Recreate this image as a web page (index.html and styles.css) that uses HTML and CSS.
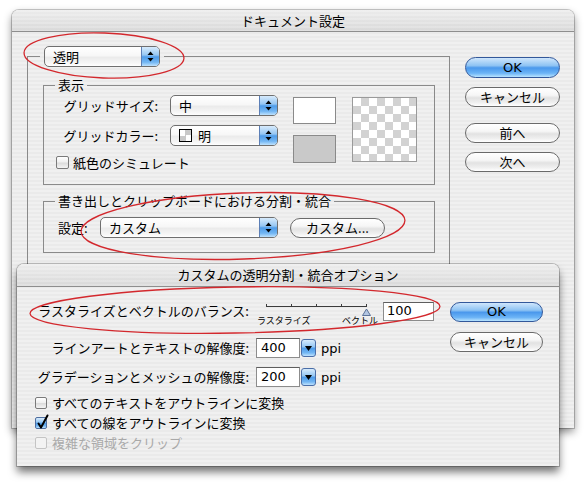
FILE: index.html
```html
<!DOCTYPE html>
<html lang="ja">
<head>
<meta charset="utf-8">
<title>ドキュメント設定</title>
<link rel="stylesheet" href="styles.css">
</head>
<body>
<div class="desk">
  <section class="win win-main">
    <header class="titlebar">ドキュメント設定</header>
    <div class="main-body">
      <fieldset class="grp grp-outer">
        <legend class="lg-popup">
          <div class="popup popup-trans">
            <span class="val">透明</span>
            <span class="cap"><svg width="7" height="11" viewBox="0 0 7 11"><polygon points="3.5,0.5 6.5,4 0.5,4" fill="#000"/><polygon points="0.5,7 6.5,7 3.5,10.5" fill="#000"/></svg></span>
          </div>
        </legend>
        <fieldset class="grp grp-view">
          <legend class="lg">表示</legend>
          <div class="view-row">
            <div class="form-grid">
              <span class="lbl">グリッドサイズ:</span>
              <div class="popup popup-mid">
                <span class="val">中</span>
                <span class="cap"><svg width="7" height="11" viewBox="0 0 7 11"><polygon points="3.5,0.5 6.5,4 0.5,4" fill="#000"/><polygon points="0.5,7 6.5,7 3.5,10.5" fill="#000"/></svg></span>
              </div>
              <span class="lbl">グリッドカラー:</span>
              <div class="popup popup-mid">
                <span class="val val-icon"><span class="mini-checker"></span>明</span>
                <span class="cap"><svg width="7" height="11" viewBox="0 0 7 11"><polygon points="3.5,0.5 6.5,4 0.5,4" fill="#000"/><polygon points="0.5,7 6.5,7 3.5,10.5" fill="#000"/></svg></span>
              </div>
              <div class="check-row span2"><span class="cb cb-lg"></span><span>紙色のシミュレート</span></div>
            </div>
            <div class="swatches">
              <div class="sw sw-white"></div>
              <div class="sw sw-gray"></div>
            </div>
            <div class="checker"></div>
          </div>
        </fieldset>
        <fieldset class="grp grp-export">
          <legend class="lg">書き出しとクリップボードにおける分割・統合</legend>
          <div class="export-row">
            <span class="lbl-set">設定:</span>
            <div class="popup popup-wide">
              <span class="val">カスタム</span>
              <span class="cap"><svg width="7" height="11" viewBox="0 0 7 11"><polygon points="3.5,0.5 6.5,4 0.5,4" fill="#000"/><polygon points="0.5,7 6.5,7 3.5,10.5" fill="#000"/></svg></span>
            </div>
            <button class="btn btn-custom">カスタム...</button>
          </div>
        </fieldset>
      </fieldset>
      <div class="btn-col main-btns">
        <button class="btn btn-default btn-ok">OK</button>
        <button class="btn btn-cancel">キャンセル</button>
        <button class="btn btn-prev">前へ</button>
        <button class="btn btn-next">次へ</button>
      </div>
    </div>
  </section>

  <section class="win win-sub">
    <header class="titlebar titlebar-sub">カスタムの透明分割・統合オプション</header>
    <div class="sub-body">
      <div class="sub-form">
        <div class="row row-balance">
          <span class="rlbl">ラスタライズとベクトルのバランス:</span>
          <div class="slider">
            <svg class="slider-track" width="122" height="16" viewBox="0 0 122 16">
              <line x1="10" y1="6.5" x2="111" y2="6.5" stroke="#3c3c3c" stroke-width="1"/>
              <line x1="10.5" y1="4" x2="10.5" y2="7" stroke="#3c3c3c"/>
              <line x1="35.5" y1="4" x2="35.5" y2="7" stroke="#3c3c3c"/>
              <line x1="60.5" y1="4" x2="60.5" y2="7" stroke="#3c3c3c"/>
              <line x1="85.5" y1="4" x2="85.5" y2="7" stroke="#3c3c3c"/>
              <line x1="110.5" y1="4" x2="110.5" y2="7" stroke="#3c3c3c"/>
              <polygon points="110.5,9 114.5,15.5 106.5,15.5" fill="#b3c6e2" stroke="#5d7398" stroke-width="1"/>
            </svg>
            <div class="slider-labels"><span>ラスタライズ</span><span>ベクトル</span></div>
          </div>
          <div class="field field-balance">100</div>
        </div>
        <div class="row row-res">
          <span class="rlbl">ラインアートとテキストの解像度:</span>
          <div class="field field-res">400</div>
          <span class="stepper"><svg width="7" height="5" viewBox="0 0 7 5"><polygon points="0,0 7,0 3.5,5" fill="#000"/></svg></span>
          <span class="unit">ppi</span>
        </div>
        <div class="row row-res row-res2">
          <span class="rlbl">グラデーションとメッシュの解像度:</span>
          <div class="field field-res">200</div>
          <span class="stepper"><svg width="7" height="5" viewBox="0 0 7 5"><polygon points="0,0 7,0 3.5,5" fill="#000"/></svg></span>
          <span class="unit">ppi</span>
        </div>
        <div class="checks">
          <div class="check-row sub-check"><span class="cb"></span><span>すべてのテキストをアウトラインに変換</span></div>
          <div class="check-row sub-check"><span class="cb cb-on"><svg width="12" height="12" viewBox="0 0 12 12"><path d="M2.5 5.5 L5 9.5 L11.5 -2.5" fill="none" stroke="#000" stroke-width="2" stroke-linecap="round" stroke-linejoin="round"/></svg></span><span>すべての線をアウトラインに変換</span></div>
          <div class="check-row sub-check is-disabled"><span class="cb cb-off"></span><span>複雑な領域をクリップ</span></div>
        </div>
      </div>
      <div class="btn-col sub-btns">
        <button class="btn btn-default btn-ok2">OK</button>
        <button class="btn btn-cancel2">キャンセル</button>
      </div>
    </div>
  </section>

  <svg class="marks" width="586" height="483" viewBox="0 0 586 483">
    <ellipse cx="104" cy="55.5" rx="80" ry="22.5" transform="rotate(2 104 55.5)"/>
    <ellipse cx="243" cy="226" rx="162" ry="33" transform="rotate(-2 243 226)"/>
    <ellipse cx="235" cy="310" rx="205" ry="23" transform="rotate(-1 235 310)"/>
  </svg>
</div>
</body>
</html>
```

FILE: styles.css
```css
* { box-sizing: border-box; }
html, body { margin: 0; padding: 0; }
body {
  width: 586px;
  height: 483px;
  overflow: hidden;
  background: #ffffff;
  font-family: "Noto Sans CJK JP", "Noto Sans", sans-serif;
  font-size: 13px;
  color: #000;
}
.desk { position: relative; width: 586px; height: 483px; }

/* windows */
.win {
  position: absolute;
  background: repeating-linear-gradient(to bottom, #f0f0f0 0, #f0f0f0 2px, #eaeaea 2px, #eaeaea 4px);
  border-radius: 7px 7px 0 0;
  overflow: hidden;
}
.win-main {
  left: 12px; top: 10px; width: 562px; height: 418px;
  box-shadow: 0 0 0 1px rgba(0,0,0,0.2), 0 4px 9px rgba(0,0,0,0.45);
}
.win-sub {
  left: 17px; top: 264px; width: 542px; height: 202px;
  box-shadow: 0 0 0 1px rgba(0,0,0,0.22), 0 6px 9px rgba(0,0,0,0.55);
}
.titlebar {
  height: 22px;
  border-bottom: 1px solid #8e8e8e;
  background:
    repeating-linear-gradient(to bottom, rgba(255,255,255,0.2) 0, rgba(255,255,255,0.2) 2px, rgba(0,0,0,0) 2px, rgba(0,0,0,0) 4px),
    linear-gradient(to bottom, #ececec, #d9d9d9);
  text-align: center;
  line-height: 21px;
  font-size: 13px;
}
.titlebar-sub { height: 23px; line-height: 22px; }

/* group boxes */
.grp {
  margin: 0;
  border: 1px solid #8a8a8a;
  min-width: 0;
}
.main-body {
  display: flex;
  align-items: flex-start;
  padding: 14px 14px 0 15px;
}
.grp-outer {
  width: 423px;
  height: 362px;
  flex: none;
  padding: 10px 14px 0 15px;
}
.lg-popup { margin-left: -3px; padding: 0 4px; }
.lg { margin-left: -1px; padding: 0 3px; line-height: 16px; font-size: 13px; }

.grp-view { padding: 2px 12px 11px 12px; }
.grp-export { margin-top: 8px; padding: 8px 12px 14px 12px; }

/* popups */
.popup {
  display: flex;
  flex: none;
  height: 21px;
  border: 1px solid #6f6f6f;
  border-radius: 5px;
  overflow: hidden;
  background: linear-gradient(to bottom, #ffffff 0%, #f7f7f7 45%, #ebebeb 55%, #f6f6f6 85%, #ffffff 100%);
}
.popup .val { flex: 1; padding-left: 8px; line-height: 19px; white-space: nowrap; }
.popup .cap {
  width: 18px;
  flex: none;
  display: flex;
  align-items: center;
  justify-content: center;
  border-left: 1px solid #5c7fb6;
  background: linear-gradient(to bottom, #d7ebfc 0%, #96c7f3 42%, #4f9ce9 52%, #72b6f3 80%, #bfe2fd 100%);
}
.popup-trans { width: 116px; }
.popup-mid { width: 108px; }
.popup-wide { width: 178px; }
.val-icon { display: flex; align-items: center; gap: 6px; }
.mini-checker {
  width: 13px; height: 13px;
  border: 1px solid #000;
  background-color: #fff;
  background-image: conic-gradient(#c8c8c8 25%, #fff 0 50%, #c8c8c8 0 75%, #fff 0);
  background-size: 11px 11px;
}

/* view group */
.view-row { display: flex; align-items: flex-start; }
.form-grid {
  display: grid;
  grid-template-columns: 102px 108px;
  grid-template-rows: 21px 21px 18px;
  column-gap: 12px;
  row-gap: 9px;
  width: 222px;
  flex: none;
}
.lbl { text-align: right; line-height: 21px; white-space: nowrap; }
.span2 { grid-column: 1 / 3; margin-top: -3px; }
.check-row { display: flex; align-items: center; gap: 4px; line-height: 18px; white-space: nowrap; }
.cb {
  position: relative;
  width: 12px; height: 12px;
  flex: none;
  border: 1px solid #7a7a7a;
  border-radius: 2px;
  background: linear-gradient(to bottom, #ffffff 0%, #f0f0f0 45%, #dcdcdc 55%, #f4f4f4 100%);
}
.cb-lg { width: 13px; height: 13px; }
.cb svg { position: absolute; left: 0; top: 0; overflow: visible; }
.cb-on {
  border-color: #4f6e9f;
  background: linear-gradient(to bottom, #d7ebfc 0%, #96c7f3 42%, #4f9ce9 52%, #72b6f3 80%, #bfe2fd 100%);
}
.cb-off { border-color: #c4c4c4; background: #f3f3f3; }
.is-disabled { color: #a9a9a9; }

.swatches { margin-left: 15px; width: 43px; flex: none; }
.sw { border: 1px solid #8a8a8a; }
.sw-white { margin-top: 2px; height: 27px; background: #fff; }
.sw-gray { margin-top: 11px; height: 28px; background: #c9c9c9; }
.checker {
  flex: none;
  margin-left: 16px;
  margin-top: 2px;
  width: 65px; height: 65px;
  border: 1px solid #9a9a9a;
  background-color: #fff;
  background-image: conic-gradient(#d2d2d2 25%, #fff 0 50%, #d2d2d2 0 75%, #fff 0);
  background-size: 16px 16px;
}

/* export group */
.export-row { display: flex; align-items: center; height: 21px; }
.lbl-set { width: 44px; flex: none; padding-left: 2px; line-height: 21px; white-space: nowrap; }

/* buttons */
.btn-col { display: flex; flex-direction: column; flex: none; }
.main-btns { width: 95px; margin-left: 15px; margin-top: 11px; }
.btn {
  display: block;
  width: 100%;
  height: 20px;
  margin: 0;
  padding: 0;
  border: 1px solid #6a6a6a;
  border-radius: 10px;
  background: linear-gradient(to bottom, #ffffff 0%, #f6f6f6 40%, #e2e2e2 55%, #efefef 80%, #ffffff 100%);
  font-family: "Noto Sans CJK JP", "Noto Sans", sans-serif;
  font-size: 13px;
  line-height: 18px;
  color: #000;
  text-align: center;
  white-space: nowrap;
}
.export-row .btn-custom { width: 95px; flex: none; margin-left: 12px; }
.btn-default {
  border-color: #33589a;
  background: linear-gradient(to bottom, #cfe6fc 0%, #8ec3f3 40%, #4a98ec 52%, #6cb4f6 80%, #b9e4ff 100%);
  font-family: "DejaVu Sans", sans-serif;
  font-weight: normal;
}
.btn-ok { height: 21px; border-radius: 11px; line-height: 19px; }
.btn-cancel { margin-top: 9px; }
.btn-prev { margin-top: 16px; }
.btn-next { margin-top: 9px; }

/* sub dialog */
.sub-body {
  display: flex;
  align-items: flex-start;
  padding: 13px 16px 0 13px;
}
.sub-form { width: 404px; flex: none; display: flex; flex-direction: column; }
.row { display: flex; align-items: center; }
.rlbl { width: 219px; flex: none; margin-right: 7px; text-align: right; white-space: nowrap; line-height: 18px; }
.row-balance { height: 28px; align-items: flex-start; }
.row-balance .rlbl { margin-top: 2px; }
.slider { width: 122px; flex: none; display: flex; flex-direction: column; }
.slider-track { display: block; }
.slider-labels {
  display: flex;
  justify-content: space-between;
  font-size: 9px;
  line-height: 10px;
  padding-left: 1px;
  white-space: nowrap;
}
.field {
  flex: none;
  background: #fff;
  border: 1px solid #8c8c8c;
  border-top-color: #5e5e5e;
  font-family: "DejaVu Sans", sans-serif;
  font-size: 13px;
  white-space: nowrap;
}
.field-balance { width: 51px; height: 19px; margin-left: 5px; margin-top: 2px; padding-left: 3px; line-height: 16px; }
.row-res { height: 20px; margin-top: 10px; }
.row-res2 { margin-top: 9px; }
.field-res { width: 44px; height: 20px; padding-left: 4px; line-height: 17px; }
.stepper {
  flex: none;
  width: 15px; height: 18px;
  margin-left: 1px;
  display: flex; align-items: center; justify-content: center;
  border: 1px solid #4a6ea8;
  border-radius: 3px;
  background: linear-gradient(to bottom, #d7ebfc 0%, #96c7f3 42%, #4f9ce9 52%, #72b6f3 80%, #bfe2fd 100%);
}
.unit { margin-left: 5px; font-family: "DejaVu Sans", sans-serif; font-size: 13px; }
.checks { margin-top: 6px; display: flex; flex-direction: column; }
.sub-check { height: 20px; padding-left: 5px; gap: 5px; }
.sub-btns { width: 93px; margin-left: 16px; margin-top: 2px; }
.btn-cancel2 { margin-top: 10px; }

/* annotation ellipses */
.marks { position: absolute; left: 0; top: 0; pointer-events: none; }
.marks ellipse { fill: none; stroke: #d3282d; stroke-width: 1.3; }
```
